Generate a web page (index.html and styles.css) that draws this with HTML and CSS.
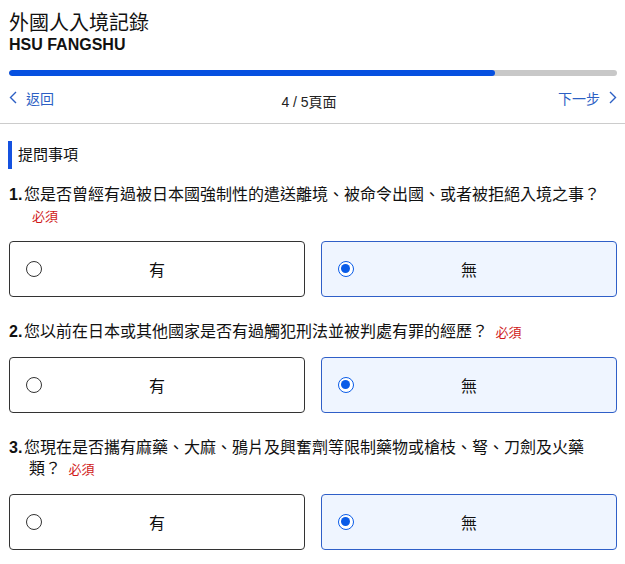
FILE: index.html
```html
<!DOCTYPE html>
<html>

<head>
    <title>外國人入境記錄</title>
    <link rel="stylesheet" href="styles.css">
</head>

<body>
    <div class="header">
        <h1 class="title">外國人入境記錄</h1>
        <div class="name">HSU FANGSHU</div>
        <div class="progress">
            <div class="progress-fill"></div>
        </div>
        <div class="nav">
            <a class="nav-link" href="#">
                <svg class="chevron" width="8" height="13" viewBox="0 0 8 13"><path d="M7 1 L1.5 6.5 L7 12" fill="none" stroke="currentColor" stroke-width="1.4"/></svg>
                <span>返回</span>
            </a>
            <div class="page-count">4 / 5頁面</div>
            <a class="nav-link" href="#">
                <span>下一步</span>
                <svg class="chevron" width="8" height="13" viewBox="0 0 8 13"><path d="M1 1 L6.5 6.5 L1 12" fill="none" stroke="currentColor" stroke-width="1.4"/></svg>
            </a>
        </div>
    </div>

    <div class="content">
        <div class="section-title">提問事項</div>

        <div class="question">
            <div class="q-text"><b class="num">1.</b>您是否曾經有過被日本國強制性的遣送離境、被命令出國、或者被拒絕入境之事？ <span class="required">必須</span></div>
            <div class="options">
                <label class="option"><span class="radio"></span><span class="option-label">有</span></label>
                <label class="option selected"><span class="radio"></span><span class="option-label">無</span></label>
            </div>
        </div>

        <div class="question">
            <div class="q-text"><b class="num">2.</b>您以前在日本或其他國家是否有過觸犯刑法並被判處有罪的經歷？ <span class="required">必須</span></div>
            <div class="options">
                <label class="option"><span class="radio"></span><span class="option-label">有</span></label>
                <label class="option selected"><span class="radio"></span><span class="option-label">無</span></label>
            </div>
        </div>

        <div class="question">
            <div class="q-text"><b class="num">3.</b>您現在是否攜有麻藥、大麻、鴉片及興奮劑等限制藥物或槍枝、弩、刀劍及火藥類？ <span class="required">必須</span></div>
            <div class="options">
                <label class="option"><span class="radio"></span><span class="option-label">有</span></label>
                <label class="option selected"><span class="radio"></span><span class="option-label">無</span></label>
            </div>
        </div>
    </div>
</body>

</html>
```

FILE: styles.css
```css
body {
    margin: 0;
    font-family: "Liberation Sans", "Noto Sans CJK TC", sans-serif;
    color: #111;
    background: #fff;
}

.header {
    padding: 10px 8px 0 9px;
    border-bottom: 1px solid #ccc;
}

.title {
    margin: 0;
    font-size: 20px;
    font-weight: normal;
    line-height: 26px;
}

.name {
    font-size: 16px;
    font-weight: bold;
    line-height: 18px;
}

.progress {
    margin-top: 16px;
    height: 6px;
    border-radius: 3px;
    background: #c8c8c8;
    overflow: hidden;
}

.progress-fill {
    width: 80%;
    height: 100%;
    border-radius: 3px;
    background: #0650e0;
}

.nav {
    display: flex;
    justify-content: space-between;
    align-items: center;
    height: 47px;
    font-size: 14px;
}

.nav-link {
    display: flex;
    align-items: center;
    gap: 9px;
    color: #2c5fc4;
    text-decoration: none;
    margin-top: -4px;
}

.page-count {
    margin-top: 2px;
    margin-left: 6px;
    color: #222;
}

.content {
    padding: 17px 8px 0 9px;
}

.section-title {
    border-left: 4px solid #1552e0;
    padding-left: 6px;
    height: 28px;
    line-height: 28px;
    font-size: 15px;
    margin-left: -1px;
}

.question {
    margin-top: 24px;
}

.section-title + .question {
    margin-top: 15px;
}

.q-text {
    font-size: 16px;
    line-height: 21px;
    padding-left: 20px;
    text-indent: -20px;
    padding-right: 10px;
}

.num {
    display: inline-block;
    width: 15px;
    text-indent: 0;
}

.required {
    color: #d01818;
    font-size: 13px;
    line-height: 14px;
    margin-left: 3px;
}

.options {
    display: flex;
    gap: 16px;
    margin-top: 15px;
}

.option {
    flex: 1;
    position: relative;
    display: flex;
    align-items: center;
    justify-content: center;
    height: 54px;
    border: 1px solid #333;
    border-radius: 4px;
    font-size: 16px;
    cursor: pointer;
}

.option.selected {
    border-color: #2f5fc8;
    background: #eff5ff;
}

.radio {
    position: absolute;
    left: 16px;
    top: 19px;
    width: 16px;
    height: 16px;
    border: 1.3px solid #333;
    border-radius: 50%;
    box-sizing: border-box;
    background: #fff;
}

.selected .radio {
    border: 1.6px solid #0a5ce8;
}

.selected .radio::after {
    content: "";
    position: absolute;
    left: 1.9px;
    top: 1.9px;
    width: 9px;
    height: 9px;
    border-radius: 50%;
    background: #0a5ce8;
}
```
